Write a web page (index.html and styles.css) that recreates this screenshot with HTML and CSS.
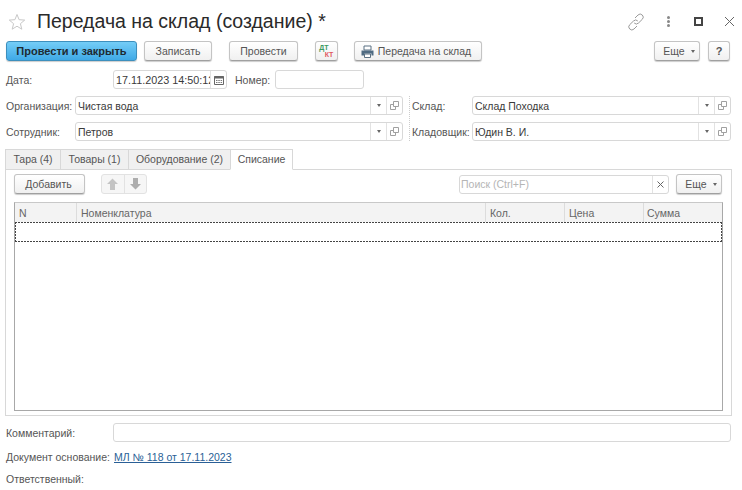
FILE: index.html
```html
<!DOCTYPE html>
<html lang="ru">
<head>
    <meta charset="UTF-8">
    <title>Передача на склад (создание)</title>
    <link rel="stylesheet" href="styles.css">
</head>
<body>
    <svg class="sprite" width="0" height="0">
        <symbol id="open" viewBox="0 0 9 9">
            <path d="M3.500 .5h5v5h-5z M.5 3.500h3M.5 3.500v5h5v-3" fill="none" stroke="#a0a0a0"/>
        </symbol>
    </svg>

    <header class="title-bar">
        <svg class="star" width="18" height="18" viewBox="0 0 18 18">
            <path d="M9 1.500l2.100 5.200 5.600.4-4.300 3.600 1.400 5.500L9 13.200l-4.800 3 1.400-5.500-4.300-3.600 5.600-.4z" fill="none" stroke="#c8c8c8"/>
        </svg>
        <h1>Передача на склад (создание) *</h1>
        <div class="window-icons">
            <svg class="link-icon" width="18" height="18" viewBox="0 0 18 18">
                <path d="M8 5l3-3a3 3 0 0 1 4.300 4.300L11.500 10a3 3 0 0 1-4.300 0M10 13l-3 3a3 3 0 0 1-4.300-4.300L6.500 8a3 3 0 0 1 4.300 0" fill="none" stroke="#9a9a9a"/>
            </svg>
            <span class="dots"><i></i><i></i><i></i></span>
            <span class="maximize"></span>
            <svg width="11" height="11" viewBox="0 0 11 11">
                <path d="M1 1l9 9M10 1l-9 9" stroke="#666" fill="none"/>
            </svg>
        </div>
    </header>

    <div class="command-bar">
        <button class="btn btn-primary">Провести и закрыть</button>
        <button class="btn btn-save">Записать</button>
        <button class="btn btn-post">Провести</button>
        <button class="btn btn-dtkt"><span class="dt">ДТ</span><span class="kt">КТ</span></button>
        <button class="btn btn-transfer">
            <svg width="13" height="13" viewBox="0 0 13 13">
                <path d="M3 1h7v4H3z" fill="#fff" stroke="#5b7183"/>
                <path d="M.5 5.500h12v5h-2v-2h-7v2h-3z" fill="#4f6b82"/>
                <path d="M3.500 9h6v3.500h-6z" fill="#fff" stroke="#5b7183"/>
            </svg>
            Передача на склад
        </button>
        <button class="btn btn-more">Еще <span class="caret"></span></button>
        <button class="btn btn-help">?</button>
    </div>

    <div class="date-row">
        <label class="date-label">Дата:</label>
        <div class="field date-field">
            <span class="field-text">17.11.2023 14:50:12</span>
            <span class="field-btn">
                <svg width="10" height="10" viewBox="0 0 10 10">
                    <path d="M.5 1.500h9v8h-9z" fill="#fff" stroke="#666"/>
                    <path d="M.5 1h9v2.500h-9z" fill="#666"/>
                    <path d="M2 5h1.500v1H2zM4.300 5h1.500v1H4.300zM6.600 5h1.500v1H6.600zM2 7h1.500v1H2zM4.300 7h1.500v1H4.300zM6.600 7h1.500v1H6.600z" fill="#777"/>
                </svg>
            </span>
        </div>
        <label class="number-label">Номер:</label>
        <div class="field number-field"></div>
    </div>

    <div class="columns">
        <div class="column column-left">
            <div class="form-row">
                <label class="left-label">Организация:</label>
                <div class="field grow">
                    <span class="field-text">Чистая вода</span>
                    <span class="field-btn"><span class="caret"></span></span>
                    <span class="field-btn"><svg width="9" height="9"><use href="#open"/></svg></span>
                </div>
            </div>
            <div class="form-row">
                <label class="left-label">Сотрудник:</label>
                <div class="field grow">
                    <span class="field-text">Петров</span>
                    <span class="field-btn"><span class="caret"></span></span>
                    <span class="field-btn"><svg width="9" height="9"><use href="#open"/></svg></span>
                </div>
            </div>
        </div>
        <div class="column column-right">
            <div class="form-row">
                <label class="right-label">Склад:</label>
                <div class="field grow">
                    <span class="field-text">Склад Походка</span>
                    <span class="field-btn"><span class="caret"></span></span>
                    <span class="field-btn"><svg width="9" height="9"><use href="#open"/></svg></span>
                </div>
            </div>
            <div class="form-row">
                <label class="right-label">Кладовщик:</label>
                <div class="field grow">
                    <span class="field-text">Юдин В. И.</span>
                    <span class="field-btn"><span class="caret"></span></span>
                    <span class="field-btn"><svg width="9" height="9"><use href="#open"/></svg></span>
                </div>
            </div>
        </div>
    </div>

    <div class="tabs">
        <div class="tab tab-1">Тара (4)</div>
        <div class="tab tab-2">Товары (1)</div>
        <div class="tab tab-3">Оборудование (2)</div>
        <div class="tab tab-active">Списание</div>
    </div>

    <section class="panel">
        <div class="toolbar">
            <button class="btn btn-add">Добавить</button>
            <div class="arrows">
                <span class="arrow">
                    <svg width="11" height="12" viewBox="0 0 11 12"><path d="M5.500 .5L11 6H8v6H3V6H0z" fill="#c4c4c4"/></svg>
                </span>
                <span class="arrow">
                    <svg width="11" height="12" viewBox="0 0 11 12"><path d="M5.500 11.500L11 6H8V0H3v6H0z" fill="#adadad"/></svg>
                </span>
            </div>
            <div class="field search">
                <span class="field-text placeholder">Поиск (Ctrl+F)</span>
                <span class="field-btn clear">
                    <svg width="7" height="7" viewBox="0 0 7 7"><path d="M.5 .5l6 6M6.500 .5l-6 6" stroke="#666" fill="none"/></svg>
                </span>
            </div>
            <button class="btn btn-more-table">Еще <span class="caret"></span></button>
        </div>

        <div class="grid">
            <div class="grid-head">
                <div class="col col-n">N</div>
                <div class="col col-name">Номенклатура</div>
                <div class="col col-qty">Кол.</div>
                <div class="col col-price">Цена</div>
                <div class="col col-sum">Сумма</div>
            </div>
            <div class="grid-row"></div>
        </div>
    </section>

    <div class="footer-row comment-row">
        <label class="footer-label">Комментарий:</label>
        <div class="field grow"></div>
    </div>
    <div class="footer-row base-row">
        <label class="footer-label">Документ основание:</label>
        <a class="doc-link" href="#">МЛ № 118 от 17.11.2023</a>
    </div>
    <div class="footer-row owner-row">
        <label>Ответственный:</label>
    </div>
</body>
</html>
```

FILE: styles.css
```css
* {
    box-sizing: border-box;
}
body {
    margin: 0;
    width: 742px;
    height: 490px;
    overflow: hidden;
    background: #fff;
    font-family: "Liberation Sans", Arial, sans-serif;
    font-size: 10.5px;
    color: #555;
}
.sprite {
    position: absolute;
}
label {
    padding-left: 1px;
}

/* title */
.title-bar {
    height: 41px;
    padding: 2px 7px 0 8px;
    display: flex;
    align-items: center;
}
.star {
    margin-right: 11px;
}
h1 {
    margin: 0;
    font-size: 19.5px;
    font-weight: normal;
    color: #2a2a2a;
}
.window-icons {
    margin-left: auto;
    display: flex;
    align-items: center;
}
.dots {
    margin-left: 22px;
    display: flex;
    flex-direction: column;
    gap: 1px;
}
.dots i {
    width: 3px;
    height: 3px;
    border-radius: 50%;
    background: #888;
}
.maximize {
    width: 9px;
    height: 9px;
    margin: 0 21px 0 24px;
    border: 2px solid #444;
}

/* buttons */
.btn {
    height: 20px;
    padding: 0;
    border: 1px solid #c4c4c4;
    border-bottom-color: #a0a0a0;
    border-radius: 3px;
    background: linear-gradient(#fff, #f0f0f0);
    box-shadow: 0 1px 1px rgba(0, 0, 0, 0.2);
    font: inherit;
    color: #555;
    display: flex;
    align-items: center;
    justify-content: center;
    flex: none;
}
.command-bar {
    height: 20px;
    padding-left: 6px;
    display: flex;
}
.btn-primary {
    width: 131px;
    border-color: #3d8fbd;
    background: linear-gradient(#74cdf7, #3fa9e6);
    font-size: 11px;
    font-weight: bold;
    color: #1d2a33;
}
.btn-save {
    width: 68px;
    margin-left: 7px;
}
.btn-post {
    width: 69px;
    margin-left: 17px;
}
.btn-dtkt {
    width: 23px;
    margin-left: 17px;
    flex-direction: column;
    font-size: 7px;
    font-weight: bold;
    line-height: 7px;
}
.dt {
    color: #3c9a5f;
    margin-right: 5px;
}
.kt {
    color: #e0555f;
    margin-left: 5px;
}
.btn-transfer {
    width: 128px;
    margin-left: 16px;
    padding-right: 4px;
    gap: 4px;
}
.btn-more {
    width: 46px;
    margin-left: auto;
    padding-left: 4px;
    gap: 6px;
}
.btn-help {
    width: 22px;
    margin: 0 12px 0 8px;
    font-size: 11px;
    font-weight: bold;
}
.caret {
    width: 0;
    height: 0;
    border: 2px solid transparent;
    border-top: 3px solid #666;
    border-bottom: 0;
}

/* fields */
.field {
    height: 19px;
    border: 1px solid #d8d8d8;
    border-radius: 3px;
    background: #fff;
    display: flex;
    align-items: center;
    overflow: hidden;
}
.grow {
    flex: 1;
}
.field-text {
    flex: 1;
    min-width: 0;
    padding-left: 2px;
    white-space: nowrap;
    overflow: hidden;
    color: #3a3a3a;
}
.field-btn {
    width: 16px;
    height: 100%;
    border-left: 1px solid #e2e2e2;
    display: flex;
    align-items: center;
    justify-content: center;
    flex: none;
}
.placeholder {
    color: #b5b5b5;
}

/* header form */
.date-row {
    height: 19px;
    margin-top: 9px;
    padding-left: 5px;
    display: flex;
    align-items: center;
}
.date-label {
    width: 108px;
}
.date-field {
    width: 114px;
    font-size: 10.8px;
}
.number-label {
    width: 40px;
    margin-left: 8px;
    padding-left: 0;
}
.number-field {
    width: 89px;
}
.columns {
    margin-top: 7px;
    padding: 0 11px 0 5px;
    display: flex;
}
.column {
    display: flex;
    flex-direction: column;
    gap: 7px;
}
.column-left {
    width: 405px;
    padding-right: 6px;
    border-right: 1px dotted #ccc;
}
.column-right {
    flex: 1;
    padding-left: 2px;
}
.form-row {
    display: flex;
    align-items: center;
}
.left-label {
    width: 70px;
}
.right-label {
    width: 60px;
    padding-left: 0;
}

/* tabs */
.tabs {
    height: 21px;
    margin: 8px 0 0 5px;
    display: flex;
    position: relative;
    z-index: 1;
}
.tab {
    padding-bottom: 1px;
    border: 1px solid #d8d8d8;
    border-right: 0;
    background: #f0f0f0;
    display: flex;
    align-items: center;
    justify-content: center;
}
.tab-1 {
    width: 55px;
}
.tab-2 {
    width: 68px;
}
.tab-3 {
    width: 102px;
}
.tab-active {
    width: 63px;
    border-right: 1px solid #d8d8d8;
    border-bottom-color: #fff;
    background: #fff;
}
.panel {
    height: 247px;
    margin: -1px 10px 0 5px;
    padding: 4px 8px 4px 8px;
    border: 1px solid #d8d8d8;
    display: flex;
    flex-direction: column;
}
.toolbar {
    height: 20px;
    display: flex;
    align-items: center;
}
.btn-add {
    width: 71px;
    padding-right: 2px;
}
.arrows {
    width: 46px;
    height: 20px;
    margin-left: 16px;
    border: 1px solid #e2e2e2;
    border-radius: 3px;
    background: #f6f6f6;
    display: flex;
}
.arrow {
    flex: 1;
    display: flex;
    align-items: center;
    justify-content: center;
}
.arrow + .arrow {
    border-left: 1px solid #e2e2e2;
}
.search {
    width: 210px;
    margin-left: auto;
}
.search .field-text {
    padding-left: 1px;
}
.clear {
    width: 16px;
}
.btn-more-table {
    width: 46px;
    margin-left: 7px;
    margin-right: 1px;
    padding-left: 4px;
    gap: 6px;
}

/* table */
.grid {
    flex: 1;
    margin-top: 8px;
    border: 1px solid #a8a8a8;
    border-top-color: #c8c8c8;
    display: flex;
    flex-direction: column;
}
.grid-head {
    height: 19px;
    background: #f3f3f3;
    display: flex;
}
.col {
    padding-left: 4px;
    border-left: 1px solid #dcdcdc;
    display: flex;
    align-items: center;
    color: #666;
}
.col-n {
    width: 61px;
    border-left: 0;
}
.col-name {
    width: 409px;
}
.col-qty,
.col-price {
    width: 79px;
}
.col-sum {
    flex: 1;
    padding-left: 3px;
}
.grid-row {
    height: 20px;
    background-image:
        repeating-linear-gradient(90deg, #444 0 2px, transparent 2px 3px),
        repeating-linear-gradient(90deg, #444 0 2px, transparent 2px 3px),
        repeating-linear-gradient(0deg, #444 0 2px, transparent 2px 3px),
        repeating-linear-gradient(0deg, #444 0 2px, transparent 2px 3px);
    background-size: 100% 1px, 100% 1px, 1px 100%, 1px 100%;
    background-position: top, bottom, left, right;
    background-repeat: no-repeat;
}

/* footer */
.footer-row {
    padding: 0 11px 0 5px;
    display: flex;
    align-items: center;
}
.comment-row {
    height: 19px;
    margin-top: 7px;
}
.footer-label {
    width: 108px;
}
.base-row {
    margin-top: 8px;
    height: 14px;
}
.base-row .footer-label {
    width: 109px;
}
.doc-link {
    color: #2a5f96;
}
.owner-row {
    margin-top: 8px;
    height: 14px;
}
```
